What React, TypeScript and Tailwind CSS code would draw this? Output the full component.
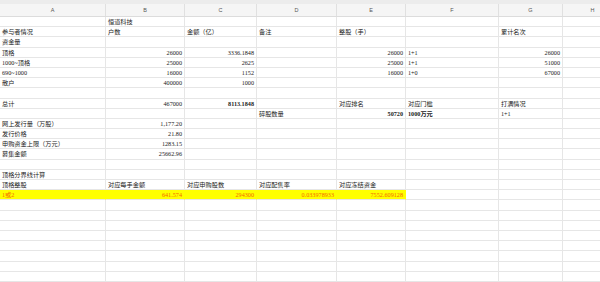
import React from "react";

type Cell = { t: string; r?: boolean; b?: boolean } | null;

const widths = [106, 79, 72, 80, 69, 93, 64, 60];
const letters = ["A", "B", "C", "D", "E", "F", "G", "H"];

const L = (t: string): Cell => ({ t });
const R = (t: string, b?: boolean): Cell => ({ t, r: true, b });
const B = (t: string): Cell => ({ t, b: true });

const rows: Cell[][] = [
  [null, L("恒道科技")],
  [L("参与者情况"), L("户数"), L("金额（亿）"), L("备注"), L("整股（手）"), null, L("累计名次")],
  [L("资金量")],
  [L("顶格"), R("26000"), R("3336.1848"), null, R("26000"), L("1+1"), R("26000")],
  [L("1000~顶格"), R("25000"), R("2625"), null, R("25000"), L("1+1"), R("51000")],
  [L("690~1000"), R("16000"), R("1152"), null, R("16000"), L("1+0"), R("67000")],
  [L("散户"), R("400000"), R("1000")],
  [],
  [L("总计"), R("467000"), R("8113.1848", true), null, L("对应排名"), L("对应门槛"), L("打满情况")],
  [null, null, null, L("碎股数量"), R("50720", true), B("1000万元"), L("1+1")],
  [L("网上发行量（万股）"), R("1,177.20")],
  [L("发行价格"), R("21.80")],
  [L("申购资金上限（万元）"), R("1283.15")],
  [L("募集金额"), R("25662.96")],
  [],
  [L("顶格分界线计算")],
  [L("顶格整股"), L("对应每手金额"), L("对应申购股数"), L("对应配售率"), L("对应冻结资金")],
];

const yellow: Cell[] = [L("1或2"), R("641.574"), R("294300"), R("0.033978933"), R("7552.609128")];

function Row({ cells, hl }: { cells: Cell[]; hl?: boolean }) {
  return (
    <div className="flex h-[10.2px]">
      {widths.map((w, i) => {
        const c = cells[i];
        const y = hl && i < 5;
        return (
          <div
            key={i}
            style={{ width: w }}
            className={
              "shrink-0 border-r border-b border-[#e6e6e6] px-[2px] leading-[9.5px] whitespace-nowrap overflow-visible " +
              (y ? "bg-[#ffff00] text-[#f56a00] border-r-[#ffff00] " : "text-[#1a1a1a] ") +
              (c?.r ? "text-right " : "text-left ") +
              (c?.b ? "font-bold" : "")
            }
          >
            {c?.t ?? ""}
          </div>
        );
      })}
    </div>
  );
}

export default function App() {
  return (
    <div
      className="w-[600px] h-[282px] overflow-hidden bg-white text-[6.2px]"
      style={{ fontFamily: '"Liberation Serif", "Noto Sans CJK SC", serif' }}
    >
      <div className="h-[4px] bg-[#ececec]" />
      <div className="flex h-[13px] bg-[#f5f5f5] border-b border-[#dcdcdc]">
        {widths.map((w, i) => (
          <div
            key={i}
            style={{ width: w, fontFamily: '"Liberation Sans", sans-serif' }}
            className="shrink-0 border-r border-[#e0e0e0] text-center text-[5.5px] leading-[13px] text-[#555]"
          >
            {letters[i]}
          </div>
        ))}
      </div>
      {rows.map((r, i) => (
        <Row key={i} cells={r} />
      ))}
      <Row cells={yellow} hl />
      {Array.from({ length: 9 }).map((_, i) => (
        <Row key={"e" + i} cells={[]} />
      ))}
    </div>
  );
}
